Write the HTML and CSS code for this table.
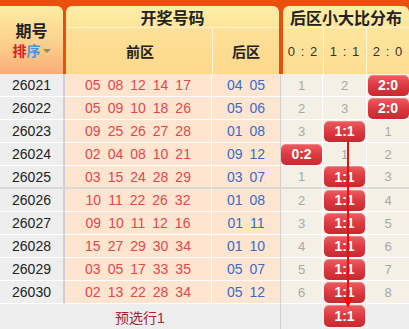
FILE: index.html
```html
<!DOCTYPE html>
<html lang="zh">
<head>
<meta charset="utf-8">
<title>开奖号码</title>
<link rel="stylesheet" href="styles.css">
</head>
<body>
<div class="board">
  <div class="head">
    <div class="tab tab-qh">
      <div class="qh">期号</div>
      <div class="sort"><span class="pai">排</span><span class="xu">序</span><span class="caret"></span></div>
    </div>
    <div class="tab tab-kj">
      <div class="tab-title">开奖号码</div>
      <div class="sub"><div class="s-front">前区</div><div class="s-back">后区</div></div>
    </div>
    <div class="tab tab-fb">
      <div class="tab-title">后区小大比分布</div>
      <div class="sub ratio"><div class="s-d0">0 : 2</div><div class="s-d1">1 : 1</div><div class="s-d2">2 : 0</div></div>
    </div>
  </div>

  <div class="rows">
    <div class="row"><div class="c-no">26021</div><div class="c-front"><span>05</span><span>08</span><span>12</span><span>14</span><span>17</span></div><div class="c-back"><span>04</span><span>05</span></div><div class="c-d0">1</div><div class="c-d1">2</div><div class="c-d2"><span class="badge">2:0</span></div></div>
    <div class="row"><div class="c-no">26022</div><div class="c-front"><span>05</span><span>09</span><span>10</span><span>18</span><span>26</span></div><div class="c-back"><span>05</span><span>06</span></div><div class="c-d0">2</div><div class="c-d1">3</div><div class="c-d2"><span class="badge">2:0</span></div></div>
    <div class="row"><div class="c-no">26023</div><div class="c-front"><span>09</span><span>25</span><span>26</span><span>27</span><span>28</span></div><div class="c-back"><span>01</span><span>08</span></div><div class="c-d0">3</div><div class="c-d1"><span class="badge">1:1</span></div><div class="c-d2">1</div></div>
    <div class="row"><div class="c-no">26024</div><div class="c-front"><span>02</span><span>04</span><span>08</span><span>10</span><span>21</span></div><div class="c-back"><span>09</span><span>12</span></div><div class="c-d0"><span class="badge">0:2</span></div><div class="c-d1">1</div><div class="c-d2">2</div></div>
    <div class="row grp"><div class="c-no">26025</div><div class="c-front"><span>03</span><span>15</span><span>24</span><span>28</span><span>29</span></div><div class="c-back"><span>03</span><span>07</span></div><div class="c-d0">1</div><div class="c-d1"><span class="badge">1:1</span></div><div class="c-d2">3</div></div>
    <div class="row"><div class="c-no">26026</div><div class="c-front"><span>10</span><span>11</span><span>22</span><span>26</span><span>32</span></div><div class="c-back"><span>01</span><span>08</span></div><div class="c-d0">2</div><div class="c-d1"><span class="badge">1:1</span></div><div class="c-d2">4</div></div>
    <div class="row"><div class="c-no">26027</div><div class="c-front"><span>09</span><span>10</span><span>11</span><span>12</span><span>16</span></div><div class="c-back"><span>01</span><span>11</span></div><div class="c-d0">3</div><div class="c-d1"><span class="badge">1:1</span></div><div class="c-d2">5</div></div>
    <div class="row"><div class="c-no">26028</div><div class="c-front"><span>15</span><span>27</span><span>29</span><span>30</span><span>34</span></div><div class="c-back"><span>01</span><span>10</span></div><div class="c-d0">4</div><div class="c-d1"><span class="badge">1:1</span></div><div class="c-d2">6</div></div>
    <div class="row"><div class="c-no">26029</div><div class="c-front"><span>03</span><span>05</span><span>17</span><span>33</span><span>35</span></div><div class="c-back"><span>05</span><span>07</span></div><div class="c-d0">5</div><div class="c-d1"><span class="badge">1:1</span></div><div class="c-d2">7</div></div>
    <div class="row"><div class="c-no">26030</div><div class="c-front"><span>02</span><span>13</span><span>22</span><span>28</span><span>34</span></div><div class="c-back"><span>05</span><span>12</span></div><div class="c-d0">6</div><div class="c-d1"><span class="badge">1:1</span></div><div class="c-d2">8</div></div>
  </div>

  <div class="foot">
    <div class="foot-label">预选行1</div>
    <div class="f-d0"></div>
    <div class="f-d1"><span class="badge">1:1</span></div>
    <div class="f-d2"></div>
  </div>

  <svg class="trend" width="409" height="329" viewBox="0 0 409 329" aria-hidden="true">
    <line x1="348" y1="141" x2="348" y2="300" stroke="#f20d0d" stroke-width="2"/>
    <polygon points="343,297 353,297 348,308" fill="#f20d0d"/>
  </svg>
</div>
</body>
</html>
```

FILE: styles.css
```css
html, body {
  margin: 0;
  padding: 0;
  background: #ffffff;
}

.board {
  position: relative;
  width: 409px;
  height: 329px;
  overflow: hidden;
  font-family: "Liberation Sans", Arial, "Noto Sans CJK SC", sans-serif;
  color: #222;
}

/* ---------- header ---------- */
.head {
  display: flex;
  height: 74px;
  box-sizing: border-box;
  padding-top: 6px;
  background: #e9500e;
}

.tab {
  display: flex;
  flex-direction: column;
  border-radius: 6px 6px 0 0;
  overflow: hidden;
}

.tab-qh {
  width: 63px;
  margin-right: 3px;
  border-top-left-radius: 0;
  align-items: center;
  justify-content: center;
  gap: 3px;
  background: linear-gradient(#fdeda4, #fcd08c 55%, #fbac79);
}

.qh {
  font-size: 16px;
  font-weight: bold;
  line-height: 17px;
  margin-top: 1px;
}

.sort {
  display: flex;
  align-items: center;
  font-size: 14px;
  line-height: 16px;
  font-weight: bold;
}

.pai { color: #d3232a; }
.xu { color: #3a9be2; }

.caret {
  width: 0;
  height: 0;
  margin-left: 2px;
  border-left: 4px solid transparent;
  border-right: 4px solid transparent;
  border-top: 4px solid #8a8a8a;
}

.tab-kj {
  width: 213px;
  margin-right: 4px;
}

.tab-fb {
  width: 126px;
}

.tab-title {
  height: 21px;
  flex: none;
  display: flex;
  align-items: center;
  justify-content: center;
  border-bottom: 1px solid #fff3cf;
  font-size: 16px;
  font-weight: bold;
  background: linear-gradient(#fdeea7, #fde59b);
}

.sub {
  flex: 1;
  display: flex;
  background: linear-gradient(#fde198, #fdd88b);
  font-size: 14px;
  font-weight: bold;
}

.sub > div {
  display: flex;
  align-items: center;
  justify-content: center;
  box-sizing: border-box;
  border-right: 1px solid #fff6dc;
}

.sub > div:last-child {
  border-right: 0;
}

.s-front { width: 147px; padding-left: 2px; }
.s-back { width: 66px; }

.ratio {
  font-weight: normal;
  font-size: 13px;
  letter-spacing: 1px;
  color: #333;
  background: linear-gradient(#fde59e, #fddd92);
}

.s-d0 { width: 41px; padding-top: 1px; }
.s-d1 { width: 43px; padding-top: 1px; }
.s-d2 { width: 42px; padding-top: 1px; }

/* ---------- body rows ---------- */
.row {
  display: grid;
  grid-template-columns: 65px 147px 68px 43px 44px 42px;
  height: 23px;
}

.row > div {
  display: flex;
  align-items: center;
  justify-content: center;
  box-sizing: border-box;
  border-bottom: 1px solid #ffffff;
}

.row.grp > div {
  border-bottom: 2px solid #d8d8d8;
}

.c-no {
  background: #eeeeee;
  border-right: 2px solid #cfcfcf;
  font-size: 14px;
  color: #222;
}

.c-front {
  background: #fde5cf;
  border-right: 1px solid #ffffff;
  color: #e5464d;
  font-size: 14px;
  gap: 7px;
}

.c-back {
  background: #fde5cf;
  color: #3a6bc8;
  font-size: 14px;
  gap: 7px;
}

.c-d0,
.c-d1,
.c-d2 {
  background: #f4f0e6;
  color: #a8a8a8;
  font-size: 13px;
}

.c-d0 {
  border-left: 1px solid #cfcfcf;
  border-right: 1px solid #ffffff;
}

.c-d1 {
  border-right: 1px solid #ffffff;
}

/* ---------- badge ---------- */
.badge {
  display: flex;
  align-items: center;
  justify-content: center;
  width: 41px;
  height: 21px;
  box-sizing: border-box;
  border-radius: 5px;
  background: linear-gradient(#ee5c61, #dc3a40 50%, #c8282f);
  box-shadow: inset 0 1px 0 rgba(255, 255, 255, 0.25);
  color: #ffffff;
  font-size: 14px;
  font-weight: bold;
  letter-spacing: 0;
}

/* ---------- footer ---------- */
.foot {
  display: grid;
  grid-template-columns: 280px 43px 44px 42px;
  height: 25px;
  background: #ededed;
}

.foot > div {
  display: flex;
  align-items: center;
  justify-content: center;
  box-sizing: border-box;
}

.foot-label {
  color: #a3262b;
  font-size: 14px;
}

.f-d0 {
  border-left: 1px solid #cfcfcf;
  border-right: 1px solid #f6f6f6;
}

.f-d1 {
  border-right: 1px solid #f6f6f6;
  align-items: flex-start !important;
  padding-top: 1px;
}

.f-d1 .badge {
  height: 22px;
}

/* ---------- trend overlay ---------- */
.trend {
  position: absolute;
  top: 0;
  left: 0;
  pointer-events: none;
}
```
